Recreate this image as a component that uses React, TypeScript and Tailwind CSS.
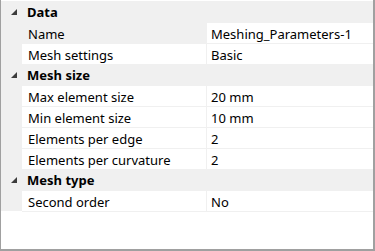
import React from "react";

type Row = { label: string; value: string; selected?: boolean };
type Group = { title: string; rows: Row[] };

const groups: Group[] = [
  {
    title: "Data",
    rows: [
      { label: "Name", value: "Meshing_Parameters-1", selected: true },
      { label: "Mesh settings", value: "Basic" },
    ],
  },
  {
    title: "Mesh size",
    rows: [
      { label: "Max element size", value: "20 mm" },
      { label: "Min element size", value: "10 mm" },
      { label: "Elements per edge", value: "2" },
      { label: "Elements per curvature", value: "2" },
    ],
  },
  {
    title: "Mesh type",
    rows: [{ label: "Second order", value: "No" }],
  },
];

function Arrow() {
  return (
    <svg width="6" height="6" viewBox="0 0 6 6" className="block">
      <polygon points="6,0 6,6 0,6" fill="#3c3c3c" />
    </svg>
  );
}

export default function App() {
  return (
    <div
      className="w-[375px] h-[251px] bg-white border-l border-r-2 border-b-2 border-[#a0a0a0] flex flex-col pt-[1px] text-[13px] leading-[20px] text-black overflow-hidden"
      style={{ fontFamily: '"Noto Sans", "Open Sans", sans-serif' }}
    >
      {groups.map((g) => (
        <div key={g.title} className="flex flex-col">
          <div className="h-[21px] bg-[#f0f0f0] flex items-center">
            <div className="w-[21px] flex justify-center pl-[4px] pt-[1px]">
              <Arrow />
            </div>
            <div className="pl-[5px] pt-[1px] font-bold">{g.title}</div>
          </div>
          {g.rows.map((r) => (
            <div key={r.label} className="h-[21px] flex bg-[#f0f0f0]">
              <div className="w-[21px] shrink-0" />
              <div
                className={`w-[184px] shrink-0 border-t border-[#f0f0f0] flex items-center pl-[6px] pt-[1px] ${
                  r.selected ? "bg-[#f0f0f0]" : "bg-white"
                }`}
              >
                {r.label}
              </div>
              <div className="w-[1px] shrink-0 bg-[#f0f0f0]" />
              <div className="flex-1 bg-white border-t border-[#f0f0f0] flex items-center pl-[4px] pt-[1px]">
                {r.value}
              </div>
            </div>
          ))}
        </div>
      ))}
      <div className="h-[1px] bg-[#f0f0f0] ml-[21px]" />
    </div>
  );
}
